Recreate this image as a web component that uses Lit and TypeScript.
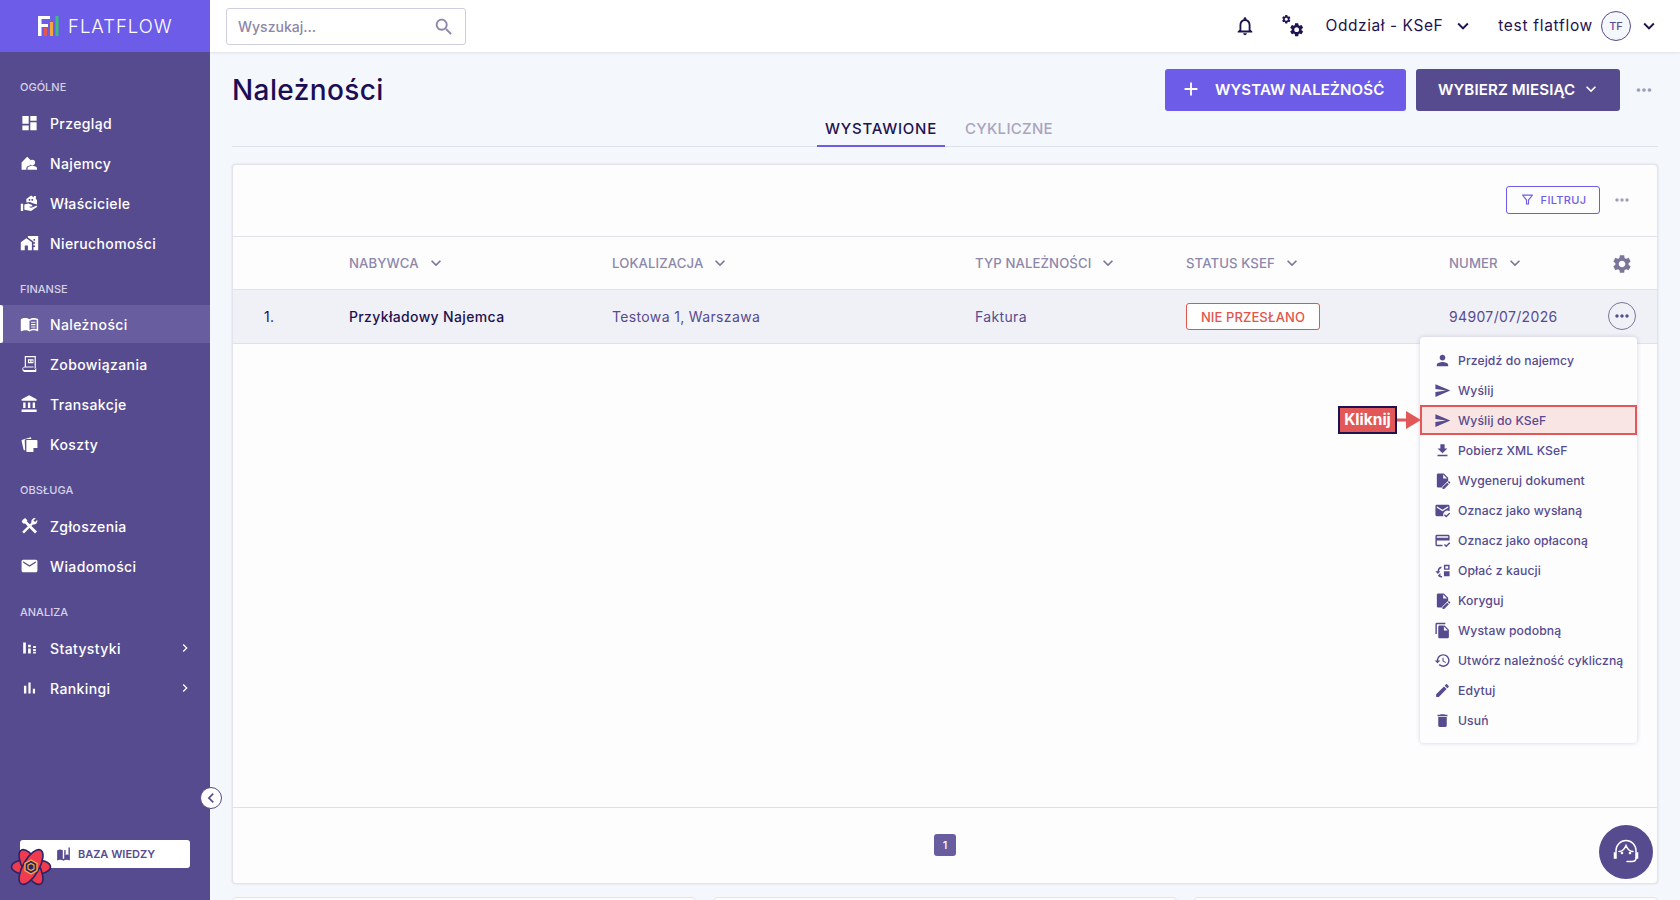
import { LitElement, css, html, svg } from 'lit';
import { customElement } from 'lit/decorators.js';

const P = {
  dashboard: 'M3 13h8V3H3v10zm0 8h8v-6H3v6zm10 0h8V11h-8v10zm0-18v6h8V3h-8z',
  tenants: 'M2 20.5v-9L9 4l4.3 4.3A4.6 4.6 0 0 0 12 11.5c0 1.3.5 2.4 1.4 3.2-3.2.5-5.4 2-5.4 3.8v2zM15.5 8a3.5 3.5 0 1 1 0 7 3.5 3.5 0 0 1 0-7zM9.5 20.5v-2c0-1.8 3.5-3 6-3s6 1.2 6 3v2z',
  owners: 'M1 13h3v9H1zM5.5 14l5-1.5 5 2v2H12v1l2.5.5 6-2.5c1-.3 1.8 1 .8 1.6L14 22l-8.5-1.5zM8 11.5V7l6-4.5L17.5 5V3H20v4l1.5 1.2V14L17 12.5l-4.5-1.8-2 .3zM11 7v2h2V7zm3.5 0v2h2V7z',
  homeWork: 'M1 11v10h5v-6h4v6h5V11L8 6zM10 3v1.97l7 5V11h2v2h-2v2h2v2h-2v4h6V3H10zm9 6h-2V7h2v2z',
  book: 'M21 5c-1.11-.35-2.33-.5-3.5-.5-1.95 0-4.05.4-5.5 1.5-1.45-1.1-3.55-1.5-5.5-1.5S2.45 4.9 1 6v14.65c0 .25.25.5.5.5.1 0 .15-.05.25-.05C3.1 20.45 5.05 20 6.5 20c1.95 0 4.05.4 5.5 1.5 1.35-.85 3.8-1.5 5.5-1.5 1.65 0 3.35.3 4.75 1.05.1.05.15.05.25.05.25 0 .5-.25.5-.5V6c-.6-.45-1.25-.75-2-1zm0 13.5c-1.1-.35-2.3-.5-3.5-.5-1.7 0-4.15.65-5.5 1.5V8c1.35-.85 3.8-1.5 5.5-1.5 1.2 0 2.4.15 3.5.5v11.5zM14 9h5.5v1.5H14zm0 3h5.5v1.5H14zm0 3h5.5v1.5H14z',
  ledger: 'M6 2h14v16h-1.5V3.5h-11V15H17v1.5H5.5c-1 0-1.5.7-1.5 1.5s.5 1.5 1.5 1.5H19V17h1.5v5h-15A3 3 0 0 1 3 19v-1c0-1 .9-2.2 3-2.9zM10 6h7v5h-7zm1.5 1.5v2H13v-2zm3 0v2H16v-2z',
  bank: 'M4 10v7h3v-7H4zm6 0v7h3v-7h-3zM2 22h19v-3H2v3zm14-12v7h3v-7h-3zm-4.5-9L2 6v2h19V6l-9.5-5z',
  costs: 'M8 7h13c.6 0 1 .4 1 1v9l-5 5H9c-.6 0-1-.4-1-1zm9 15v-5h5zM6.5 20H6c-.8 0-1.3-.4-1.5-1.1L2 8.2c-.2-.8.3-1.5 1-1.7l10.5-3 1 2.2H8a2 2 0 0 0-2 2z',
  tools: 'M3.5 4l3-2 3 3-1 1 13 13-2.500 2.500-13-13-1 1-3-3z|M20 2.2a4.7 4.7 0 0 0-5.700 5.700L2.800 19.200 5 21.500 16.200 10a4.700 4.700 0 0 0 5.600-5.800L19 7l-2-2z',
  mail: 'M20 4H4c-1.1 0-1.99.9-1.99 2L2 18c0 1.1.9 2 2 2h16c1.1 0 2-.9 2-2V6c0-1.1-.9-2-2-2zm0 4l-8 5-8-5V6l8 5 8-5v2z',
  bars: 'M5 9.2h3V19H5zM10.6 5h2.8v14h-2.8zm5.6 8H19v6h-2.8z',
  barsSplit: 'M4 5h3.4v14H4zM10.2 8h3.4v3h-3.4zm0 4.5h3.4V19h-3.4zM16.6 9.5H20V12h-3.4zm0 3.800H20V16h-3.4zm0 3.900H20V19h-3.4z',
  person: 'M12 12c2.21 0 4-1.79 4-4s-1.79-4-4-4-4 1.79-4 4 1.79 4 4 4zm0 2c-2.67 0-8 1.34-8 4v2h16v-2c0-2.66-5.33-4-8-4z',
  send: 'M2.01 21L23 12 2.01 3 2 10l15 2-15 2z',
  download: 'M19 9h-4V3H9v6H5l7 7 7-7zM5 18v2h14v-2H5z',
  docEdit: 'M6 2h8l6 6v4.2l-8.5 8.5V22H6c-1.1 0-2-.9-2-2V4c0-1.1.9-2 2-2zm7 1.5V9h5.5zM21.5 13.2l1.3 1.3c.3.3.3.8 0 1.1l-1 1-2.4-2.4 1-1c.3-.3.8-.3 1.1 0zM18.6 15l2.4 2.4-6.6 6.6H12v-2.4z',
  mailCheck: 'M20 4H4c-1.1 0-2 .9-2 2v12c0 1.1.9 2 2 2h9.3a6 6 0 0 1 8.7-7V6c0-1.1-.9-2-2-2zm0 4l-8 5-8-5V6l8 5 8-5zM17.3 22L14 18.7l1.4-1.4 1.9 1.9 4.2-4.2 1.5 1.4z',
  cardCheck: 'M20 4H4c-1.1 0-2 .9-2 2v12c0 1.1.9 2 2 2h8v-2H4v-6h18V6c0-1.1-.9-2-2-2zm0 4H4V6h16zM17.3 21.5L14 18.2l1.4-1.4 1.9 1.9 4.2-4.2 1.5 1.4z',
  deposit: 'M14 4h8v7h-8zm2 2v3h4V6zM14 13h8v7h-8zM10.5 6.5A7 7 0 0 0 5 13H2l3.5 4L9 13H7a5 5 0 0 1 3.5-4.5zM9 15.5l-3.5 4 1 .9a7 7 0 0 0 5 1.6v-2a5 5 0 0 1-2.5-.8z',
  copy: 'M16 1H4c-1.1 0-2 .9-2 2v14h2V3h12V1zm-1 4l6 6v10c0 1.1-.9 2-2 2H7.99C6.89 23 6 22.1 6 21l.01-14c0-1.1.89-2 1.99-2h7zm-1 7h5.5L14 6.5V12z',
  history: 'M13 3c-4.97 0-9 4.03-9 9H1l3.89 3.89.07.14L9 12H6c0-3.87 3.13-7 7-7s7 3.13 7 7-3.13 7-7 7c-1.93 0-3.68-.79-4.94-2.06l-1.42 1.42C8.27 19.99 10.51 21 13 21c4.97 0 9-4.03 9-9s-4.03-9-9-9zm-1 5v5l4.28 2.54.72-1.21-3.5-2.08V8H12z',
  edit: 'M3 17.25V21h3.75L17.81 9.94l-3.75-3.75L3 17.25zM20.71 7.04c.39-.39.39-1.02 0-1.41l-2.34-2.34c-.39-.39-1.02-.39-1.41 0l-1.83 1.83 3.75 3.75 1.83-1.83z',
  trash: 'M6 19c0 1.1.9 2 2 2h8c1.1 0 2-.9 2-2V7H6v12zM19 4h-3.5l-1-1h-5l-1 1H5v2h14V4z',
  gear: 'M19.14 12.94c.04-.3.06-.61.06-.94 0-.32-.02-.64-.07-.94l2.03-1.58c.18-.14.23-.41.12-.61l-1.92-3.32c-.12-.22-.37-.29-.59-.22l-2.39.96c-.5-.38-1.03-.7-1.62-.94l-.36-2.54c-.04-.24-.24-.41-.48-.41h-3.84c-.24 0-.43.17-.47.41l-.36 2.54c-.59.24-1.13.57-1.62.94l-2.39-.96c-.22-.08-.47 0-.59.22L2.74 8.87c-.12.21-.08.47.12.61l2.03 1.58c-.05.3-.09.63-.09.94s.02.64.07.94l-2.03 1.58c-.18.14-.23.41-.12.61l1.92 3.32c.12.22.37.29.59.22l2.39-.96c.5.38 1.03.7 1.62.94l.36 2.54c.05.24.24.41.48.41h3.84c.24 0 .44-.17.47-.41l.36-2.54c.59-.24 1.13-.56 1.62-.94l2.39.96c.22.08.47 0 .59-.22l1.92-3.32c.12-.22.07-.47-.12-.61l-2.01-1.58zM12 15.6c-1.98 0-3.6-1.62-3.6-3.6s1.62-3.6 3.6-3.6 3.6 1.62 3.6 3.6-1.62 3.6-3.6 3.6z',
  bell: 'M12 22c1.1 0 2-.9 2-2h-4c0 1.1.9 2 2 2zm6-6v-5c0-3.07-1.63-5.64-4.5-6.32V4c0-.83-.67-1.5-1.5-1.5s-1.5.67-1.5 1.5v.68C7.64 5.36 6 7.92 6 11v5l-2 2v1h16v-1l-2-2zm-2 1H8v-6c0-2.48 1.51-4.5 4-4.5s4 2.02 4 4.5v6z',
  search: 'M15.5 14h-.79l-.28-.27C15.41 12.59 16 11.11 16 9.5 16 5.91 13.09 3 9.5 3S3 5.91 3 9.5 5.91 16 9.5 16c1.61 0 3.09-.59 4.23-1.57l.27.28v.79l5 4.99L20.49 19l-4.99-5zm-6 0C7.01 14 5 11.99 5 9.5S7.01 5 9.5 5 14 7.01 14 9.5 11.99 14 9.5 14z',
  down: 'M16.59 8.59L12 13.17 7.41 8.59 6 10l6 6 6-6z',
  right: 'M10 6L8.59 7.41 13.17 12l-4.58 4.59L10 18l6-6z',
  left: 'M15.41 7.41L14 6l-6 6 6 6 1.41-1.41L10.83 12z',
  more: 'M6 10c-1.1 0-2 .9-2 2s.9 2 2 2 2-.9 2-2-.9-2-2-2zm12 0c-1.1 0-2 .9-2 2s.9 2 2 2 2-.9 2-2-.9-2-2-2zm-6 0c-1.1 0-2 .9-2 2s.9 2 2 2 2-.9 2-2-.9-2-2-2z',
  add: 'M19 13h-6v6h-2v-6H5v-2h6V5h2v6h6v2z',
  filter: 'M3.5 4h17v1.5L14.5 13v7h-5v-7l-6-7.5zM6 5.8l5.3 6.500v6h1.400v-6L18 5.800z',
  kb: 'M21 5v15.5c-1.4-.8-3-1.1-4.5-1.1-1.7 0-3.3.5-4.5 1.4-1.3-.9-2.9-1.4-4.5-1.4-1.6 0-3.1.3-4.5 1.1V6.5C4.3 5.5 5.9 5 7.5 5c1.3 0 2.500.3 3.500 1v12h2V6c.7-.4 1.4-.7 2-.8V13l2-1.5 2 1.500V2h2z',
};

const icon = (d: string, size = 20) => html`<svg class="ic" width=${size} height=${size} viewBox="0 0 24 24" fill="currentColor" fill-rule="evenodd">${d.split('|').map((p) => svg`<path d=${p}></path>`)}</svg>`;

const NAV = [
  { label: 'OGÓLNE', items: [['Przegląd', P.dashboard], ['Najemcy', P.tenants], ['Właściciele', P.owners], ['Nieruchomości', P.homeWork]] },
  { label: 'FINANSE', items: [['Należności', P.book, 'active'], ['Zobowiązania', P.ledger], ['Transakcje', P.bank], ['Koszty', P.costs]] },
  { label: 'OBSŁUGA', items: [['Zgłoszenia', P.tools], ['Wiadomości', P.mail]] },
  { label: 'ANALIZA', items: [['Statystyki', P.barsSplit, 'sub'], ['Rankingi', P.bars, 'sub']] },
];

const MENU: [string, string, boolean?][] = [
  ['Przejdź do najemcy', P.person],
  ['Wyślij', P.send],
  ['Wyślij do KSeF', P.send, true],
  ['Pobierz XML KSeF', P.download],
  ['Wygeneruj dokument', P.docEdit],
  ['Oznacz jako wysłaną', P.mailCheck],
  ['Oznacz jako opłaconą', P.cardCheck],
  ['Opłać z kaucji', P.deposit],
  ['Koryguj', P.docEdit],
  ['Wystaw podobną', P.copy],
  ['Utwórz należność cykliczną', P.history],
  ['Edytuj', P.edit],
  ['Usuń', P.trash],
];

const COLS = ['NABYWCA', 'LOKALIZACJA', 'TYP NALEŻNOŚCI', 'STATUS KSEF', 'NUMER'];

@customElement('app-root')
export class AppRoot extends LitElement {
  static styles = css`
    :host {
      display: flex;
      position: relative;
      width: 1680px;
      height: 900px;
      overflow: hidden;
      background: #f4f7fb;
      color: #1f1250;
      font-family: Inter, 'Noto Sans', sans-serif;
    }
    .ic { flex: none; display: block; }

    /* sidebar */
    .side {
      width: 210px;
      flex: none;
      background: #574b90;
      color: #fff;
      position: relative;
    }
    .logo {
      height: 52px;
      background: #6c5ce7;
      display: flex;
      align-items: center;
      gap: 9px;
      padding-left: 38px;
    }
    .logo span {
      font-size: 18.5px;
      font-weight: 300;
      letter-spacing: 1px;
    }
    .navwrap { padding-top: 25px; }
    .group { margin-bottom: 16px; }
    .group h4 {
      margin: 0 0 6px;
      padding-left: 20px;
      height: 20px;
      line-height: 20px;
      font-size: 11px;
      font-weight: 500;
      color: #d5d1e8;
    }
    .item {
      height: 40px;
      display: flex;
      align-items: center;
      padding-left: 20px;
      font-size: 14px;
      font-weight: 500;
      letter-spacing: 0.38px;
      position: relative;
    }
    .item .ic { margin-right: 11px; width: 19px; }
    .item.active { background: #685d9f; height: 38px; margin: 1px 0; }
    .item.active::before {
      content: '';
      position: absolute;
      left: 0;
      top: 0;
      bottom: 0;
      width: 3px;
      background: #fff;
      border-radius: 0 2px 2px 0;
    }
    .item .arrow { margin-left: auto; margin-right: 17px; color: #fff; }
    .item .arrow .ic { margin: 0; width: 16px; }
    .collapse {
      position: absolute;
      left: 200px;
      top: 787px;
      width: 22px;
      height: 22px;
      box-sizing: border-box;
      border-radius: 50%;
      background: #fff;
      border: 1.5px solid #574b90;
      color: #574b90;
      display: flex;
      align-items: center;
      justify-content: center;
      z-index: 3;
    }
    .kb {
      position: absolute;
      left: 20px;
      top: 840px;
      width: 170px;
      height: 28px;
      background: #fff;
      border-radius: 3px;
      display: flex;
      align-items: center;
      justify-content: center;
      gap: 6px;
      color: #574b90;
      font-size: 11px;
      font-weight: 600;
    }
    .atom { position: absolute; left: 10px; top: 848px; z-index: 2; }

    /* main */
    .main { flex: 1; min-width: 0; display: flex; flex-direction: column; }
    .top {
      height: 52px;
      flex: none;
      box-sizing: border-box;
      background: #fff;
      box-shadow: 0 1px 3px rgba(40, 30, 90, 0.1);
      display: flex;
      align-items: center;
      padding: 0 20px 0 16px;
      font-size: 15.5px;
      font-weight: 400;
    }
    .search {
      width: 240px;
      height: 37px;
      margin-top: 1px;
      box-sizing: border-box;
      border: 1px solid #cfcde0;
      border-radius: 3px;
      display: flex;
      align-items: center;
      justify-content: space-between;
      padding: 0 10px 0 11px;
      color: #8d87ab;
      font-size: 14px;
      font-weight: 500;
    }
    .tools { margin-left: auto; display: flex; align-items: center; margin-top: -1px; }
    .bell { margin-right: 25px; }
    .cogs { margin-right: 21px; width: 24px; height: 24px; display: block; }
    .branch { letter-spacing: 0.56px; margin-right: 9px; }
    .me { margin-left: 24px; margin-right: 8px; letter-spacing: 0.7px; }
    .avatar {
      width: 30px;
      height: 30px;
      box-sizing: border-box;
      border-radius: 50%;
      border: 1px solid #574b90;
      background: #f4f7fb;
      color: #574b90;
      font-size: 11px;
      font-weight: 500;
      display: flex;
      align-items: center;
      justify-content: center;
      margin-right: 7px;
    }

    .content { padding: 0 22px; flex: 1; display: flex; flex-direction: column; }
    .head { display: flex; align-items: center; height: 42px; margin-top: 17px; }
    h1 {
      margin: 0;
      font-size: 28px;
      font-weight: 500;
      letter-spacing: 0.4px;
      color: #1c0e55;
      flex: 1;
    }
    .btn {
      height: 42px;
      padding-bottom: 2px;
      border-radius: 3px;
      box-sizing: border-box;
      display: flex;
      align-items: center;
      color: #fff;
      font-size: 15.1px;
      font-weight: 600;
      letter-spacing: 0.1px;
    }
    .btn.add { background: #6c5ce7; width: 241px; padding-left: 15px; gap: 13px; margin-right: 10px; }
    .btn.month { background: #574b90; width: 204px; padding-left: 22px; gap: 6px; }
    .dots { color: #a19db9; }
    .head .dots { margin-left: 13px; margin-right: 3px; }

    .tabs {
      height: 36px;
      box-sizing: border-box;
      border-bottom: 1px solid #dfe1ea;
      display: flex;
      justify-content: center;
      gap: 2px;
      padding-right: 12px;
      font-size: 15px;
      font-weight: 500;
      letter-spacing: 0.75px;
    }
    .tab { padding: 0 8px; line-height: 36px; height: 36px; box-sizing: border-box; color: #a9a5bf; }
    .tab.on { color: #1f1250; border-bottom: 2px solid #6c5ce7; }
    .tab + .tab { margin-left: 10px; letter-spacing: 0.3px; }

    .card {
      margin-top: 17px;
      height: 720px;
      flex: none;
      box-sizing: border-box;
      background: #fdfdfe;
      border: 1px solid #e3e4ee;
      border-radius: 4px;
      box-shadow: 0 0 2px rgba(60, 50, 120, 0.18);
      position: relative;
      display: flex;
      flex-direction: column;
    }
    .bar {
      height: 72px;
      flex: none;
      box-sizing: border-box;
      border-bottom: 1px solid #e1e1ec;
      display: flex;
      align-items: center;
      justify-content: flex-end;
      padding-right: 25px;
      padding-bottom: 2px;
    }
    .filter {
      width: 94px;
      height: 28px;
      box-sizing: border-box;
      border: 1px solid #6c5ce7;
      border-radius: 3px;
      color: #6c5ce7;
      font-size: 11px;
      font-weight: 500;
      letter-spacing: 0.35px;
      display: flex;
      align-items: center;
      justify-content: center;
      gap: 6px;
      margin-right: 12px;
    }
    .grid {
      display: grid;
      grid-template-columns: 85px 263px 363px 211px 263px 1fr;
      padding-left: 31px;
      align-items: center;
    }
    .thead {
      height: 53px;
      flex: none;
      box-sizing: border-box;
      border-bottom: 1px solid #e1e1ec;
      color: #8d87ab;
      font-size: 13.2px;
      font-weight: 500;
      letter-spacing: 0.1px;
    }
    .th { display: flex; align-items: center; gap: 7px; }
    .th .ic { color: #7b7599; }
    .thead .settings { position: absolute; left: 1378px; top: 88px; color: #7b7599; }
    .row {
      height: 54px;
      flex: none;
      box-sizing: border-box;
      background: #f0f1f6;
      border-bottom: 1px solid #e1e1ec;
      font-size: 14px;
      color: #574b90;
      position: relative;
      letter-spacing: 0.35px;
    }
    .row .dark { color: #1f1250; font-weight: 500; }
    .row .num { font-weight: 400; }
    .badge {
      display: inline-flex;
      align-items: center;
      justify-content: center;
      width: 134px;
      height: 27px;
      box-sizing: border-box;
      border: 1px solid #e2554b;
      border-radius: 3px;
      background: #fff;
      color: #e2554b;
      font-size: 13px;
      font-weight: 500;
      letter-spacing: 0.1px;
    }
    .rowmore {
      position: absolute;
      left: 1375px;
      top: 12px;
      width: 28px;
      height: 28px;
      box-sizing: border-box;
      border: 1px solid #7b7599;
      border-radius: 50%;
      display: flex;
      align-items: center;
      justify-content: center;
      color: #574b90;
    }
    .spacer { flex: 1; }
    .foot {
      height: 76px;
      flex: none;
      box-sizing: border-box;
      border-top: 1px solid #e1e1ec;
      display: flex;
      align-items: center;
      justify-content: center;
      padding-bottom: 2px;
    }
    .page {
      width: 22px;
      height: 22px;
      border-radius: 3px;
      background: #685d9f;
      color: #fff;
      font-size: 11px;
      font-weight: 500;
      display: flex;
      align-items: center;
      justify-content: center;
    }

    .menu {
      position: absolute;
      left: 1187px;
      top: 172px;
      width: 217px;
      height: 406px;
      box-sizing: border-box;
      padding: 8px 0;
      background: #fdfdfe;
      border-radius: 4px;
      box-shadow: 0 0 4px rgba(60, 50, 120, 0.22);
      color: #574b90;
      font-size: 12.2px;
      font-weight: 500;
      letter-spacing: 0.1px;
      z-index: 2;
    }
    .mi {
      height: 30px;
      display: flex;
      align-items: center;
      padding-left: 14px;
      gap: 7px;
      box-sizing: border-box;
    }
    .mi.hit {
      background: #fae5e5;
      outline: 2px solid #e25858;
      outline-offset: -2px;
    }
    .kliknij {
      position: absolute;
      left: 1105px;
      top: 241px;
      height: 28px;
      display: flex;
      align-items: center;
      z-index: 3;
    }
    .kliknij span {
      display: block;
      width: 59px;
      height: 28px;
      box-sizing: border-box;
      line-height: 24px;
      text-align: center;
      background: #e25858;
      border: 2px solid #1f1250;
      color: #fff;
      font-size: 15.5px;
      font-weight: 700;
    }
    .help {
      position: absolute;
      left: 1599px;
      top: 825px;
      width: 54px;
      height: 54px;
      border-radius: 50%;
      background: #574b90;
      display: flex;
      align-items: center;
      justify-content: center;
      z-index: 4;
    }
    .peek { display: flex; gap: 17px; margin-top: 13px; }
    .peek div {
      flex: 1;
      height: 30px;
      background: #fdfdfe;
      border: 1px solid #e3e4ee;
      border-radius: 4px;
    }
  `;

  private renderNav() {
    return NAV.map(
      (g) => html`<div class="group">
        <h4>${g.label}</h4>
        ${g.items.map(
          ([name, d, flag]) => html`<div class="item ${flag === 'active' ? 'active' : ''}">
            ${icon(d)}${name}
            ${flag === 'sub' ? html`<span class="arrow">${icon(P.right, 16)}</span>` : ''}
          </div>`
        )}
      </div>`
    );
  }

  private renderAtom() {
    return html`<svg class="atom" width="42" height="38" viewBox="-21 -19 42 38">
      <g fill="#f03a4f" stroke="#2a2466" stroke-width="1.6">
        <ellipse rx="19.5" ry="8"></ellipse>
        <ellipse rx="19.5" ry="8" transform="rotate(60)"></ellipse>
        <ellipse rx="19.5" ry="8" transform="rotate(-60)"></ellipse>
      </g>
      <polygon points="0,-7 6,-3.5 6,3.5 0,7 -6,3.5 -6,-3.5" fill="#2a2466" stroke="#f5a83a" stroke-width="1.4"></polygon>
      <polygon points="0,-3.5 3,-1.8 3,1.8 0,3.5 -3,1.8 -3,-1.8" fill="none" stroke="#f5a83a" stroke-width="1.2"></polygon>
    </svg>`;
  }

  render() {
    return html`
      <aside class="side">
        <div class="logo">
          <svg width="21" height="20" viewBox="0 0 21 20">
            <path d="M0 0h12v3H3.5v5H10v3H3.5v9H0z" fill="#fff"></path>
            <rect x="6" y="12" width="3" height="8" fill="#e8574e"></rect>
            <rect x="12" y="6" width="3" height="14" fill="#f5a83a"></rect>
            <rect x="17.5" y="0" width="3" height="20" fill="#38c07a"></rect>
          </svg>
          <span>FLATFLOW</span>
        </div>
        <div class="navwrap">${this.renderNav()}</div>
        <div class="kb">${icon(P.kb, 17)}BAZA WIEDZY</div>
        ${this.renderAtom()}
        <div class="collapse">${icon(P.left, 20)}</div>
      </aside>

      <div class="main">
        <header class="top">
          <div class="search">Wyszukaj...${icon(P.search, 22)}</div>
          <div class="tools">
            <span class="bell">${icon(P.bell, 22)}</span>
            <svg class="cogs" viewBox="0 0 24 24" fill="currentColor" fill-rule="evenodd">
              <path transform="translate(7.5 7.5) scale(.68)" d=${P.gear}></path>
              <path transform="scale(.44)" d=${P.gear}></path>
            </svg>
            <span class="branch">Oddział - KSeF</span>
            ${icon(P.down, 22)}
            <span class="me">test flatflow</span>
            <span class="avatar">TF</span>
            ${icon(P.down, 22)}
          </div>
        </header>

        <div class="content">
          <div class="head">
            <h1>Należności</h1>
            <div class="btn add">${icon(P.add, 22)}WYSTAW NALEŻNOŚĆ</div>
            <div class="btn month">WYBIERZ MIESIĄC${icon(P.down, 20)}</div>
            <span class="dots">${icon(P.more, 22)}</span>
          </div>
          <div class="tabs">
            <div class="tab on">WYSTAWIONE</div>
            <div class="tab">CYKLICZNE</div>
          </div>

          <section class="card">
            <div class="bar">
              <div class="filter">${icon(P.filter, 15)}FILTRUJ</div>
              <span class="dots">${icon(P.more, 20)}</span>
            </div>
            <div class="grid thead">
              <span></span>
              ${COLS.map((c) => html`<div class="th">${c}${icon(P.down, 20)}</div>`)}
              <span class="settings">${icon(P.gear, 22)}</span>
            </div>
            <div class="grid row">
              <span class="dark num">1.</span>
              <span class="dark">Przykładowy Najemca</span>
              <span>Testowa 1, Warszawa</span>
              <span>Faktura</span>
              <span><span class="badge">NIE PRZESŁANO</span></span>
              <span>94907/07/2026</span>
              <div class="rowmore">${icon(P.more, 20)}</div>
            </div>
            <div class="spacer"></div>
            <div class="foot"><span class="page">1</span></div>

            <div class="menu">
              ${MENU.map(
                ([name, d, hit]) => html`<div class="mi ${hit ? 'hit' : ''}">${icon(d, 17)}${name}</div>`
              )}
            </div>
            <div class="kliknij">
              <span>Kliknij</span>
              <svg width="24" height="20" viewBox="0 0 24 20">
                <rect x="0" y="8.5" width="10" height="3" fill="#e25858"></rect>
                <polygon points="9,1 24,10 9,19" fill="#e25858"></polygon>
              </svg>
            </div>
          </section>
          <div class="peek"><div></div><div></div><div></div></div>
        </div>
      </div>

      <div class="help">
        <svg width="30" height="30" viewBox="0 0 30 30" fill="none" stroke="#fff" stroke-width="1.5" stroke-linecap="round">
          <path d="M5 15v-1.500a10 10 0 0 1 20 0V15"></path>
          <path d="M8 14.500c3 0 5.500-2.500 7-6 1.500 3.500 4 6 7 6"></path>
          <path d="M25 21c0 2.500-2 3.500-4 3.500h-5"></path>
          <rect x="3.500" y="16" width="1.500" height="5" fill="#fff"></rect>
          <rect x="25" y="16" width="1.500" height="5" fill="#fff"></rect>
          <circle cx="11" cy="16" r=".6" fill="#fff"></circle>
          <circle cx="19" cy="16" r=".6" fill="#fff"></circle>
        </svg>
      </div>
    `;
  }
}
